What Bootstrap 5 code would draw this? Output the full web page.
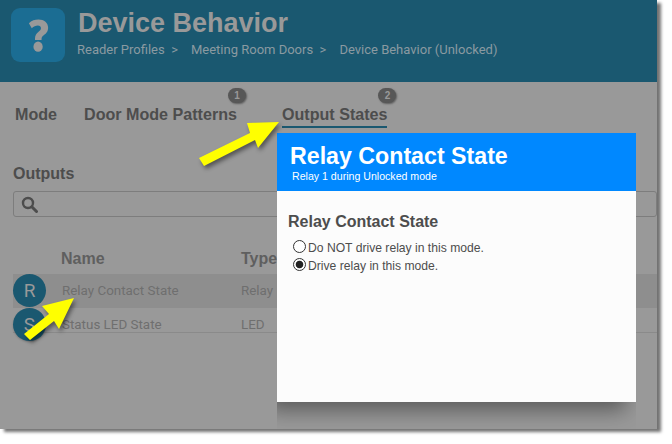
<!DOCTYPE html>
<html lang="en">
<head>
  <meta charset="UTF-8">
  <meta name="viewport" content="width=device-width, initial-scale=1">
  <title>Device Behavior</title>
  <link href="https://cdn.jsdelivr.net/npm/bootstrap@5.3.3/dist/css/bootstrap.min.css" rel="stylesheet">
  <style>
    body {
      background: #fff;
      font-family: "Liberation Sans", Arial, sans-serif;
      overflow: hidden;
      height: 444px;
    }
    .app-frame {
      width: 657px;
      height: 429px;
      background: #999;
      box-shadow: 4px 3px 3px rgba(0, 0, 0, 0.55);
      position: relative;
    }
    .app-head {
      height: 82px;
      background: #1a5870;
      padding: 8px 11px;
      gap: 13px;
    }
    .app-icon {
      width: 54px;
      height: 54px;
      background: #1b6d93;
      border-radius: 9px;
    }
    .app-title {
      font-size: 27px;
      font-weight: 700;
      line-height: 31px;
      color: #999;
      margin: 0;
    }
    .crumbs {
      font-family: Roboto, sans-serif;
      font-size: 13px;
      line-height: 20px;
      color: #8a9aa1;
      gap: 13px;
      margin-top: 1px;
      margin-left: -1px;
    }
    .tab-row {
      padding: 22px 15px 0;
      gap: 27px;
      font-size: 16.1px;
      font-weight: 700;
      color: #4d4d4d;
    }
    .tab-item {
      position: relative;
      line-height: 20px;
      padding-bottom: 2px;
    }
    .tab-on {
      border-bottom: 2px solid #1a5870;
      margin-left: 18px;
    }
    .tab-num {
      position: absolute;
      top: -16px;
      right: -9px;
      width: 18px;
      height: 15px;
      border-radius: 8px;
      background: #575757;
      color: #999;
      font-size: 10px;
      line-height: 15px;
      text-align: center;
      box-shadow: 1px 1px 2px rgba(0, 0, 0, 0.4);
    }
    .list-zone { padding: 36px 0 0 13px; }
    .list-head {
      font-size: 16px;
      font-weight: 700;
      color: #4d4d4d;
      line-height: 20px;
      margin-bottom: 7px;
    }
    .search-line {
      height: 26px;
      width: 644px;
      border: 1px solid #7d7d7d;
      border-radius: 3px;
      padding-left: 7px;
      margin-bottom: 32px;
    }
    .col-heads {
      font-size: 16px;
      font-weight: 700;
      color: #5f5f5f;
      line-height: 20px;
      padding-left: 48px;
      margin-bottom: 5px;
    }
    .name-cell { width: 180px; flex: none; }
    .data-row {
      font-family: Roboto, sans-serif;
      font-size: 13.4px;
      color: #6f6f6f;
      line-height: 33px;
    }
    .data-row .name-cell { width: 179px; }
    .row-on {
      height: 34px;
      background: #8e8e8e;
    }
    .row-off {
      height: 25px;
      border-bottom: 1px solid #8a8a8a;
    }
    .row-circle {
      width: 33px;
      height: 33px;
      border-radius: 50%;
      background: #1a5870;
      color: #999;
      font-size: 19px;
      line-height: 33px;
      text-align: center;
      margin-right: 16px;
      flex: none;
    }
    .row-off .row-circle { box-shadow: 0 1px 2px rgba(0, 0, 0, 0.2); }
    .panel-over {
      position: absolute;
      left: 277px;
      top: 133px;
      width: 359px;
      height: 269px;
      background: #fcfcfc;
      box-shadow: -10px 8px 20px rgba(0, 0, 0, 0.42);
      clip-path: inset(0 0 -27px 0);
    }
    .panel-top {
      height: 58px;
      background: #0088ff;
      color: #fff;
      padding: 10px 13px 0;
    }
    .panel-title {
      font-size: 23.2px;
      font-weight: 700;
      line-height: 26px;
      margin: 0;
    }
    .panel-sub {
      font-size: 10.6px;
      line-height: 14px;
      padding-left: 2px;
    }
    .panel-body {
      padding: 21px 11px;
      color: #4d4d4d;
    }
    .panel-label {
      font-size: 16px;
      font-weight: 700;
      line-height: 20px;
      margin-bottom: 7px;
    }
    .radio-line {
      font-size: 12.15px;
      line-height: 18px;
      gap: 2px;
      padding-left: 5px;
    }
    .radio-dot {
      width: 13px;
      height: 13px;
      border: 1px solid #333;
      border-radius: 50%;
      background: #fff;
      flex: none;
      margin-top: -3px;
    }
    .radio-dot.is-on { background: radial-gradient(circle, #222 0 3.4px, #fff 4.2px); }
    .pointer-art {
      position: absolute;
      left: 0;
      top: 0;
      filter: drop-shadow(2px 3px 2px rgba(0, 0, 0, 0.45));
      pointer-events: none;
    }
  </style>
</head>
<body>

  <div class="app-frame">
    <div class="app-head d-flex">
      <div class="app-icon d-flex align-items-center justify-content-center">
        <svg width="21" height="33" viewBox="0 0 24 34" preserveAspectRatio="none">
          <path d="M1 4.500C4 1.500 8 0.500 12 0.500c6.500 0 11 3.300 11 8.500 0 4-2.500 6-5 7.700-1.800 1.200-2.500 2-2.500 4v1H8v-1.500c0-3.500 1.500-5.300 3.800-6.900 1.800-1.300 3-2.200 3-3.800 0-1.800-1.400-2.800-3.500-2.800-2.500 0-4.800 1-7 2.800z" fill="#999"/>
          <circle cx="11.500" cy="28.500" r="5.300" fill="#999"/>
        </svg>
      </div>
      <div>
        <h1 class="app-title">Device Behavior</h1>
        <div class="crumbs d-flex">
          <span>Reader Profiles &nbsp;&gt;</span>
          <span>Meeting Room Doors &nbsp;&gt;</span>
          <span>Device Behavior (Unlocked)</span>
        </div>
      </div>
    </div>

    <div class="tab-row d-flex">
      <div class="tab-item">Mode</div>
      <div class="tab-item">Door Mode Patterns<span class="tab-num">1</span></div>
      <div class="tab-item tab-on">Output States<span class="tab-num">2</span></div>
    </div>

    <div class="list-zone">
      <div class="list-head">Outputs</div>
      <div class="search-line d-flex align-items-center">
        <svg width="17" height="17" viewBox="0 0 17 17">
          <circle cx="7" cy="7" r="5" fill="none" stroke="#4d4d4d" stroke-width="2.400"/>
          <path d="M10.800 10.800 15.500 15.500" stroke="#4d4d4d" stroke-width="3" stroke-linecap="round"/>
        </svg>
      </div>
      <div class="col-heads d-flex">
        <div class="name-cell">Name</div>
        <div>Type</div>
      </div>
      <div class="data-row row-on d-flex">
        <div class="row-circle">R</div>
        <div class="name-cell">Relay Contact State</div>
        <div>Relay</div>
      </div>
      <div class="data-row row-off d-flex">
        <div class="row-circle">S</div>
        <div class="name-cell">Status LED State</div>
        <div>LED</div>
      </div>
    </div>

    <div class="panel-over">
      <div class="panel-top">
        <h2 class="panel-title">Relay Contact State</h2>
        <div class="panel-sub">Relay 1 during Unlocked mode</div>
      </div>
      <div class="panel-body">
        <div class="panel-label">Relay Contact State</div>
        <div class="radio-line d-flex align-items-center"><span class="radio-dot"></span>Do NOT drive relay in this mode.</div>
        <div class="radio-line d-flex align-items-center"><span class="radio-dot is-on"></span>Drive relay in this mode.</div>
      </div>
    </div>

    <svg class="pointer-art" width="657" height="429" viewBox="0 0 657 429">
      <path d="M279 122 247 123 250 133 199 158 204 166 255 140 258 148z" fill="#ffff00"/>
      <path d="M74 298 42 306 49 314 24 334 30 340 54 321 59 329z" fill="#ffff00"/>
    </svg>
  </div>

</body>
</html>
